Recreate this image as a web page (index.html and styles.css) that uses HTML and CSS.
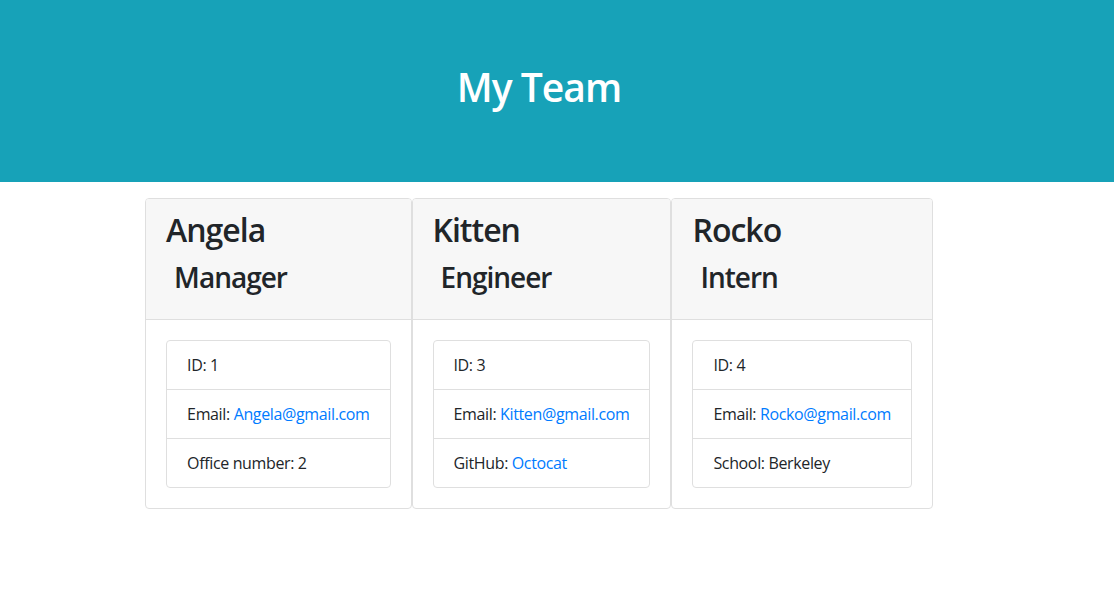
FILE: index.html
```html
<!DOCTYPE html>
<html lang="en">
<head>
<meta charset="utf-8">
<title>My Team</title>
<link rel="stylesheet" href="styles.css">
</head>
<body>
<header class="jumbotron">
  <h1 class="title">My Team</h1>
</header>
<main class="team">
  <div class="cards">
    <section class="card">
      <div class="card-header">
        <h2 class="name">Angela</h2>
        <h3 class="role">Manager</h3>
      </div>
      <div class="card-body">
        <ul class="list-group">
          <li class="list-item">ID: 1</li>
          <li class="list-item">Email: <a href="#">Angela@gmail.com</a></li>
          <li class="list-item">Office number: 2</li>
        </ul>
      </div>
    </section>
    <section class="card">
      <div class="card-header">
        <h2 class="name">Kitten</h2>
        <h3 class="role">Engineer</h3>
      </div>
      <div class="card-body">
        <ul class="list-group">
          <li class="list-item">ID: 3</li>
          <li class="list-item">Email: <a href="#">Kitten@gmail.com</a></li>
          <li class="list-item">GitHub: <a href="#">Octocat</a></li>
        </ul>
      </div>
    </section>
    <section class="card">
      <div class="card-header">
        <h2 class="name">Rocko</h2>
        <h3 class="role">Intern</h3>
      </div>
      <div class="card-body">
        <ul class="list-group">
          <li class="list-item">ID: 4</li>
          <li class="list-item">Email: <a href="#">Rocko@gmail.com</a></li>
          <li class="list-item">School: Berkeley</li>
        </ul>
      </div>
    </section>
  </div>
</main>
</body>
</html>
```

FILE: styles.css
```css
* { box-sizing: border-box; }
html, body { margin: 0; padding: 0; }
body {
  font-family: "Open Sans", "Noto Sans", sans-serif;
  font-size: 16px;
  line-height: 1.5;
  color: #212529;
  background: #fff;
}
.jumbotron {
  background: #17a2b8;
  height: 182px;
  padding-right: 36px;
  padding-bottom: 8px;
  display: flex;
  align-items: center;
  justify-content: center;
  margin-bottom: 16px;
}
.title {
  margin: 0;
  color: #fff;
  font-size: 39px;
  font-weight: 600;
  letter-spacing: -1px;
  line-height: 1.2;
}
.team {
  width: 1078px;
}
.cards {
  display: flex;
  justify-content: center;
  align-items: flex-start;
}
.card {
  border: 1px solid #dfdfdf;
  border-radius: 4px;
  background: #fff;
  overflow: hidden;
}
.card-header {
  background: #f7f7f7;
  border-bottom: 1px solid #dfdfdf;
  padding: 12px 20px;
}
.name {
  margin: 0 0 8px;
  font-size: 32px;
  font-weight: 600;
  letter-spacing: -1px;
  line-height: 38.4px;
}
.role {
  margin: 0 0 8px;
  padding-left: 8px;
  font-size: 28px;
  font-weight: 600;
  letter-spacing: -1px;
  line-height: 41.6px;
}
.card-body {
  padding: 20px;
}
.list-group {
  list-style: none;
  margin: 0;
  padding: 0;
  border: 1px solid #dfdfdf;
  border-radius: 4px;
  white-space: nowrap;
}
.list-item {
  padding: 12px 20px;
  line-height: 24px;
  letter-spacing: -0.36px;
}
.list-item + .list-item {
  border-top: 1px solid #dfdfdf;
}
a {
  color: #007bff;
  text-decoration: none;
}
```
